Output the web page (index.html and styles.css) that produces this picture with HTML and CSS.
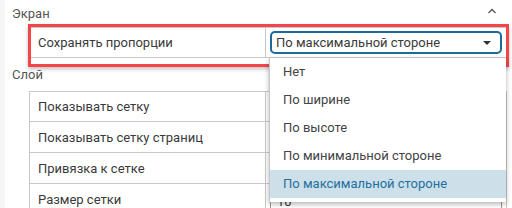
FILE: index.html
```html
<!DOCTYPE html>
<html lang="ru">
<head>
<meta charset="utf-8">
<link rel="stylesheet" href="styles.css">
</head>
<body>
<div class="panel">
  <div class="section-head">
    <span>Экран</span>
    <svg class="chev" width="10" height="6" viewBox="0 0 10 6"><polyline points="1.5,5 5,1.5 8.5,5" fill="none" stroke="#555" stroke-width="1.3"/></svg>
  </div>
  <div class="grid first highlighted">
    <div class="row">
      <div class="cell label">Сохранять пропорции</div>
      <div class="cell value">
        <div class="select">
          <span>По максимальной стороне</span>
          <svg width="8" height="4" viewBox="0 0 8 4"><polygon points="0,0 8,0 4,4" fill="#333"/></svg>
        </div>
      </div>
    </div>
    <ul class="dropdown">
      <li>Нет</li>
      <li>По ширине</li>
      <li>По высоте</li>
      <li>По минимальной стороне</li>
      <li class="selected">По максимальной стороне</li>
    </ul>
  </div>
  <div class="section-head second"><span>Слой</span></div>
  <div class="grid">
    <div class="row"><div class="cell label">Показывать сетку</div><div class="cell value"></div></div>
    <div class="row"><div class="cell label">Показывать сетку страниц</div><div class="cell value"></div></div>
    <div class="row"><div class="cell label">Привязка к сетке</div><div class="cell value"></div></div>
    <div class="row"><div class="cell label">Размер сетки</div><div class="cell value"><div class="input">10</div></div></div>
  </div>
</div>
</body>
</html>
```

FILE: styles.css
```css
* { box-sizing: border-box; margin: 0; padding: 0; }
html, body { width: 512px; height: 208px; overflow: hidden; background: #fff; }
body { font-family: Roboto, "Noto Sans", sans-serif; font-size: 13px; color: #3a3a3a; }
.panel { border-left: 5px solid #f6f6f6; height: 208px; padding-right: 5px; }
.section-head { height: 24px; display: flex; align-items: center; justify-content: space-between; padding-left: 7px; padding-right: 10px; color: #555; padding-top: 2px; }
.section-head .chev { margin-top: -4px; }
.section-head.second { height: 33px; padding-top: 0; }
.grid { margin-left: 24px; position: relative; }
.grid.first { margin-top: 3px; }
.row { display: grid; grid-template-columns: 236px 1fr; height: 31px; border: 1px solid #c8c8c8; border-top: none; }
.row:first-child { border-top: 1px solid #c8c8c8; }
.cell { display: flex; align-items: center; }
.label { padding-left: 8px; border-right: 1px solid #c8c8c8; }
.value { padding-left: 4px; padding-right: 4px; }
.highlighted::after { content: ""; position: absolute; left: -1px; right: -2px; top: -3px; height: 37px; border: 3px solid #f2464a; box-shadow: 0 2px 4px rgba(0,0,0,0.25); pointer-events: none; }
.select { flex: 1; height: 23px; border: 2px solid #1c6a9b; border-radius: 5px; display: flex; align-items: center; justify-content: space-between; padding: 0 9px 0 4px; color: #3a3a3a; }
.input { flex: 1; height: 23px; border: 1px solid #999; border-radius: 5px; display: flex; align-items: center; padding-left: 6px; margin-top: 4px; }
.dropdown { list-style: none; position: absolute; left: 240px; top: 31px; width: 237px; background: #fff; border-left: 1px solid #c8c8c8; box-shadow: 0 2px 5px rgba(0,0,0,0.3); padding-bottom: 4px; z-index: 2; }
.dropdown li { height: 28px; line-height: 28px; padding-left: 13px; color: #444; }
.dropdown li.selected { background: #cde0ea; color: #1f6f9f; }
```
